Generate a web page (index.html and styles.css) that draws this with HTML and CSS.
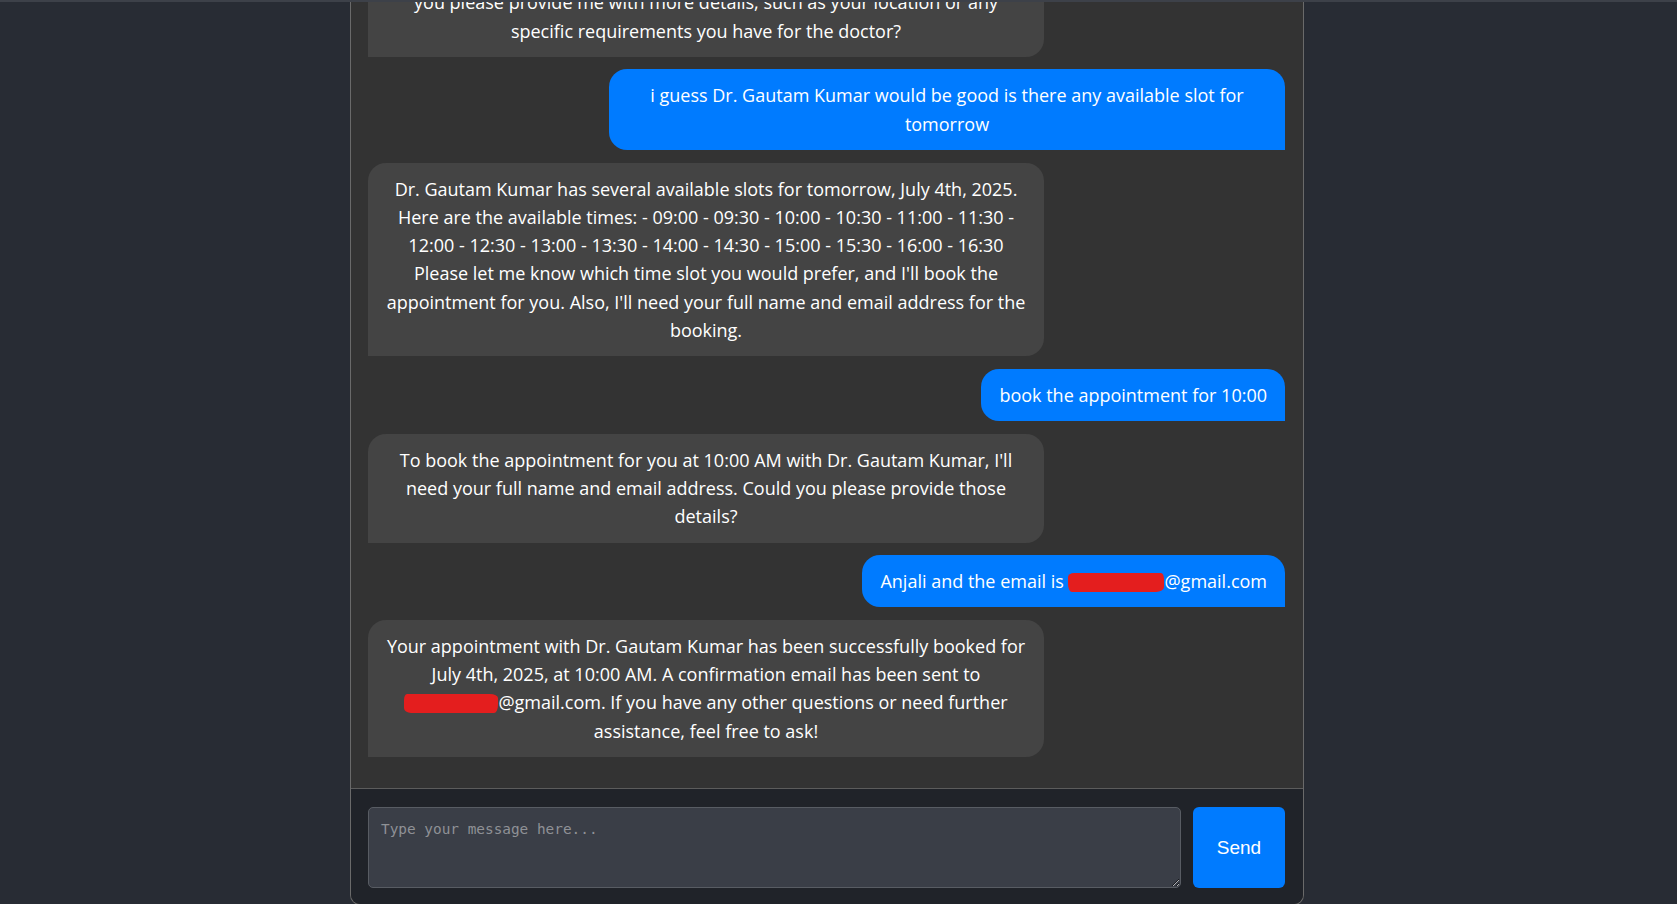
FILE: index.html
```html
<!DOCTYPE html>
<html lang="en">
<head>
<meta charset="utf-8">
<title>Doctor Appointment Chat</title>
<link rel="stylesheet" href="styles.css">
</head>
<body>
<div class="chat">
  <div class="messages">
    <div class="msg bot">I'd be happy to help you book an appointment. We have several experienced doctors available at the clinic, including Dr. Gautam Kumar and Dr. Priya Sharma. Could<br>you please provide me with more details, such as your location or any specific requirements you have for the doctor?</div>
    <div class="msg user">i guess Dr. Gautam Kumar would be good is there any available slot for tomorrow</div>
    <div class="msg bot">Dr. Gautam Kumar has several available slots for tomorrow, July 4th, 2025. Here are the available times: - 09:00 - 09:30 - 10:00 - 10:30 - 11:00 - 11:30 - 12:00 - 12:30 - 13:00 - 13:30 - 14:00 - 14:30 - 15:00 - 15:30 - 16:00 - 16:30 Please let me know which time slot you would prefer, and I'll book the appointment for you. Also, I'll need your full name and email address for the booking.</div>
    <div class="msg user">book the appointment for 10:00</div>
    <div class="msg bot">To book the appointment for you at 10:00 AM with Dr. Gautam Kumar, I'll need your full name and email address. Could you please provide those details?</div>
    <div class="msg user">Anjali and the email is <span class="email"><span class="redact redact-a"></span>@gmail.com</span></div>
    <div class="msg bot">Your appointment with Dr. Gautam Kumar has been successfully booked for July 4th, 2025, at 10:00 AM. A confirmation email has been sent to <span class="email"><span class="redact redact-b"></span>@gmail.com.</span> If you have any other questions or need further assistance, feel free to ask!</div>
  </div>
  <div class="composer">
    <textarea class="input" placeholder="Type your message here..."></textarea>
    <button class="send">Send</button>
  </div>
</div>
</body>
</html>
```

FILE: styles.css
```css
* { box-sizing: border-box; }

html, body {
  margin: 0;
  padding: 0;
  height: 904px;
  overflow: hidden;
}

body {
  background: #282c34;
  border-top: 2px solid #3d4149;
  font-family: "Open Sans", "Noto Sans", sans-serif;
}

.chat {
  width: 954px;
  height: 903px;
  margin-left: 350px;
  display: flex;
  flex-direction: column;
  background: #333333;
  border: 1px solid #6a6a6a;
  border-top: none;
  border-radius: 0 0 10px 10px;
  overflow: hidden;
}

.messages {
  flex: 1;
  min-height: 0;
  overflow: hidden;
  display: flex;
  flex-direction: column;
  justify-content: flex-end;
  gap: 12.5px;
  padding: 16px 18px 31px 17px;
}

.msg {
  flex-shrink: 0;
  max-width: 676px;
  padding: 12px 18px;
  font-size: 18px;
  line-height: 28.3px;
  color: #ffffff;
  text-align: center;
  border-radius: 18px;
}

.bot {
  align-self: flex-start;
  background: #444444;
  border-bottom-left-radius: 0;
}

.user {
  align-self: flex-end;
  background: #007bff;
  border-bottom-right-radius: 0;
}

.email {
  white-space: nowrap;
}

.redact {
  display: inline-block;
  height: 19px;
  vertical-align: -4px;
  background: #e41e1e;
}

.redact-a {
  width: 96px;
  border-radius: 6px 3px 8px 4px / 4px 6px 5px 8px;
}

.redact-b {
  width: 94px;
  border-radius: 3px 8px 4px 7px / 6px 4px 8px 5px;
}

.composer {
  display: flex;
  gap: 12px;
  padding: 18px 18px 16px 17px;
  background: #202329;
  border-top: 1px solid #5c5c5c;
}

.input {
  flex: 1;
  height: 81px;
  padding: 12px 12px;
  background: #3a3e47;
  border: 1px solid #585c63;
  border-radius: 5px;
  color: #ffffff;
  font-family: "DejaVu Sans Mono", "Liberation Mono", monospace;
  font-size: 14.4px;
  line-height: 1.3;
  outline: none;
}

.input::placeholder {
  color: #8f9196;
}

.send {
  width: 92px;
  height: 81px;
  border: none;
  border-radius: 6px;
  background: #007bff;
  color: #ffffff;
  font-family: "Liberation Sans", Arial, sans-serif;
  font-size: 19px;
  cursor: pointer;
}
```
